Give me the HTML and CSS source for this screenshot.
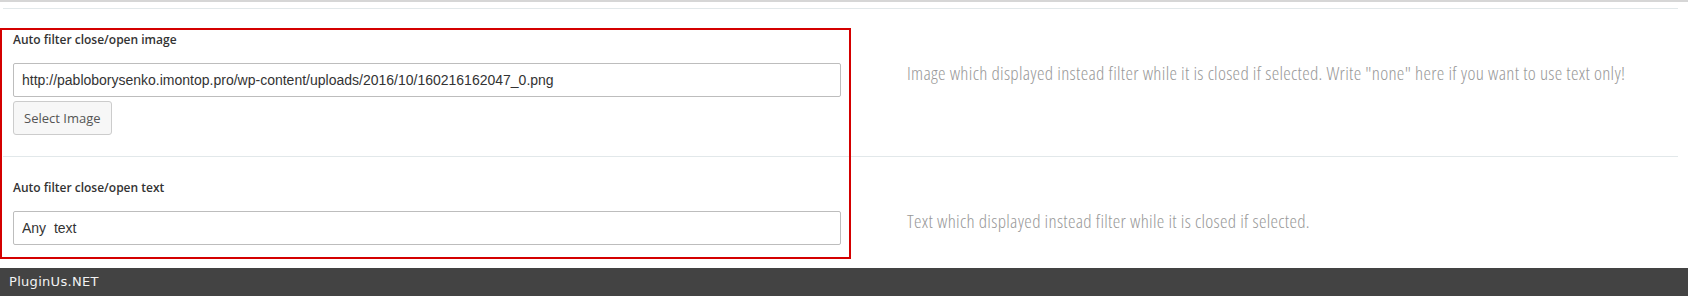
FILE: index.html
```html
<!DOCTYPE html>
<html lang="en">
<head>
  <meta charset="UTF-8">
  <title>Auto filter options</title>
  <meta name="viewport" content="width=device-width, initial-scale=1.0">
  <link rel="stylesheet" href="styles.css">
</head>
<body>

  <div class="top-rule"></div>

  <div class="options">
    <div class="option-row">
      <div class="option-field">
        <label class="option-label" for="toggleImage">Auto filter close/open image</label>
        <input type="text" id="toggleImage" class="option-input" value="http://pabloborysenko.imontop.pro/wp-content/uploads/2016/10/160216162047_0.png">
        <button class="select-btn">Select Image</button>
      </div>
      <p class="option-desc">Image which displayed instead filter while it is closed if selected. Write "none" here if you want to use text only!</p>
    </div>

    <div class="option-row">
      <div class="option-field">
        <label class="option-label" for="toggleText">Auto filter close/open text</label>
        <input type="text" id="toggleText" class="option-input" value="Any  text">
      </div>
      <p class="option-desc">Text which displayed instead filter while it is closed if selected.</p>
    </div>
  </div>

  <!-- highlight frame around the two fields -->
  <div class="highlight-frame"></div>

  <div class="footer-bar">PluginUs.NET</div>

</body>
</html>
```

FILE: styles.css
```css
body {
  margin: 0;
  padding: 0;
  background: #fff;
  font-family: 'Open Sans', sans-serif;
  color: #333;
  position: relative;
}

.top-rule {
  height: 2px;
  background: #d6d6d6;
}

.options {
  padding: 6px 10px 0 3px;
}

.option-row {
  display: grid;
  grid-template-columns: 848px 1fr;
  border-top: 1px solid #e2e8ea;
}

.option-field {
  display: flex;
  flex-direction: column;
  align-items: flex-start;
  padding: 22px 0 21px 10px;
}

.option-row:last-child .option-field {
  padding-bottom: 23px;
}

.option-label {
  font-size: 12px;
  font-weight: 600;
  line-height: 18px;
  color: #333;
  margin-bottom: 14px;
}

.option-input {
  box-sizing: border-box;
  width: 828px;
  height: 34px;
  margin: 0;
  padding: 0 8px;
  border: 1px solid #bdbdbd;
  border-radius: 2px;
  font-family: 'Liberation Sans', Arial, sans-serif;
  font-size: 14px;
  color: #333;
  background: #fff;
}

.select-btn {
  box-sizing: border-box;
  margin-top: 4px;
  height: 34px;
  padding: 0 10px;
  background: #f7f7f7;
  border: 1px solid #cccccc;
  border-radius: 3px;
  font-family: 'Open Sans', sans-serif;
  font-size: 13px;
  color: #555;
}

.option-desc {
  margin: 0;
  padding: 52px 0 0 56px;
  font-family: 'Open Sans', sans-serif;
  font-size: 19px;
  font-weight: 300;
  font-stretch: 75%;
  letter-spacing: 0.3px;
  line-height: 24px;
  color: #999;
}

.highlight-frame {
  position: absolute;
  left: 0;
  top: 28px;
  width: 851px;
  height: 231px;
  box-sizing: border-box;
  border: 2px solid #d40000;
  pointer-events: none;
}

.footer-bar {
  height: 28px;
  line-height: 28px;
  padding-left: 9px;
  background: #434343;
  color: #f2f2f2;
  font-family: 'DejaVu Sans', sans-serif;
  font-size: 13px;
  letter-spacing: 0.3px;
}
```
